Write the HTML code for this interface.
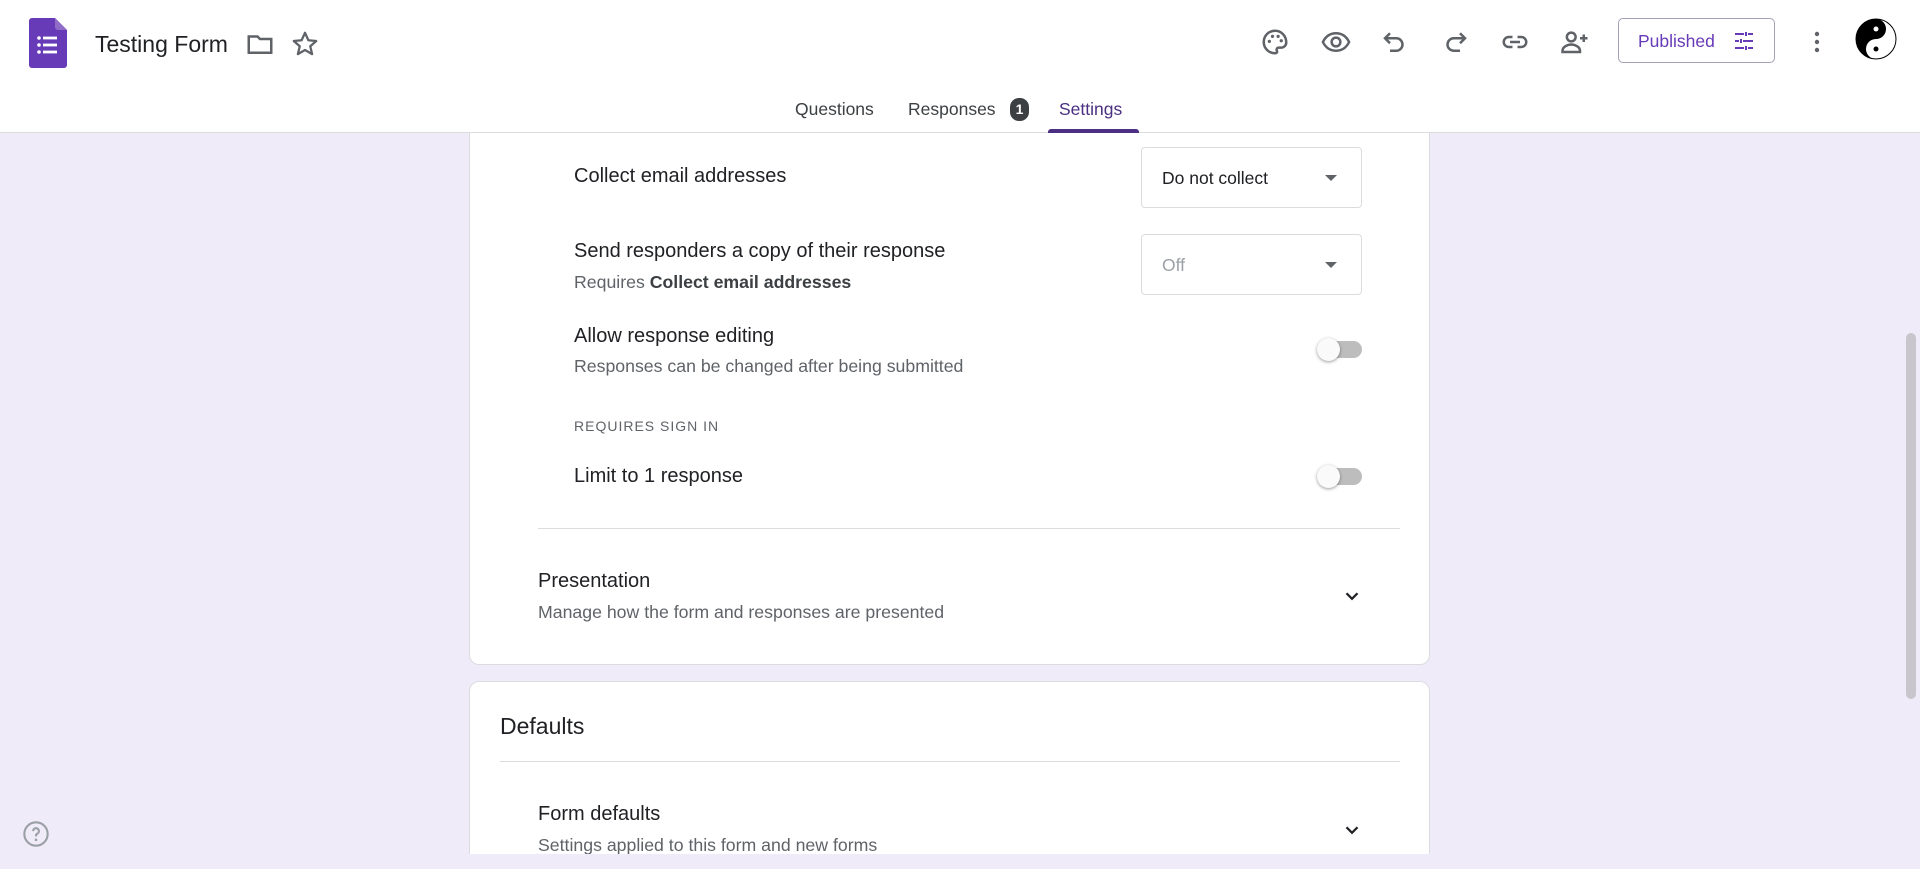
<!DOCTYPE html>
<html><head><meta charset="utf-8">
<style>
*{box-sizing:border-box;margin:0;padding:0}
body{width:1920px;height:869px;overflow:hidden;background:#f0ebf8;font-family:"Liberation Sans",Arial,sans-serif;color:#202124;position:relative}
.hdr{position:absolute;left:0;top:0;width:1920px;height:133px;background:#fff;border-bottom:1px solid #dadce0;z-index:5}
.abs{position:absolute}
.ic{position:absolute;top:27px;width:30px;height:30px}
.tab{position:absolute;top:99px;font-size:17.5px;color:#3c4043}
.card{position:absolute;left:469px;width:961px;background:#fff;border:1px solid #dadce0;border-radius:10px}
.t{position:absolute;font-size:20px;color:#202124}
.s{position:absolute;font-size:17.7px;color:#5f6368}
.dd{position:absolute;left:1141px;width:221px;height:61px;border:1px solid #dadce0;border-radius:4px;background:#fff}
.dd span{position:absolute;left:20px;top:20px;font-size:17.5px}
.dd i{position:absolute;right:24px;top:27px;border-left:6px solid transparent;border-right:6px solid transparent;border-top:6px solid #5f6368}
.tg{position:absolute;left:1316px;width:46px}
.tg .tr{position:absolute;left:6px;top:4px;width:40px;height:17px;border-radius:9px;background:#bdbdbd}
.tg .kn{position:absolute;left:1px;top:1px;width:23px;height:23px;border-radius:50%;background:#fafafa;box-shadow:0 1px 3px rgba(0,0,0,.4)}
.div{position:absolute;height:1px;background:#dadce0}
</style></head><body>
<div class="hdr">
  <svg class="abs" style="left:29px;top:18px" width="38" height="50" viewBox="0 0 38 50"><path d="M3 0h23l12 12v35a3 3 0 0 1-3 3H3a3 3 0 0 1-3-3V3a3 3 0 0 1 3-3z" fill="#673ab7"/><path d="M26 0l12 12H29a3 3 0 0 1-3-3z" fill="#8e6cc8"/><g fill="#fff"><circle cx="10" cy="20" r="1.8"/><circle cx="10" cy="27" r="1.8"/><circle cx="10" cy="34" r="1.8"/><rect x="14" y="18.6" width="14" height="2.8"/><rect x="14" y="25.6" width="14" height="2.8"/><rect x="14" y="32.6" width="14" height="2.8"/></g></svg>
  <div class="abs" style="left:95px;top:31px;font-size:23px;color:#202124">Testing Form</div>
  <svg class="ic" style="left:245px;top:29px" viewBox="0 0 24 24"><path d="M3 6h7l2 2h9v11H3z" fill="none" stroke="#5f6368" stroke-width="2"/></svg>
  <svg class="ic" style="left:290px;top:29px" viewBox="0 0 24 24"><path d="M12 3l2.7 6 6.3.6-4.8 4.2 1.5 6.3L12 16.8 6.3 20.1l1.5-6.3L3 9.6l6.3-.6z" fill="none" stroke="#5f6368" stroke-width="1.8" stroke-linejoin="round"/></svg>
  <svg class="ic" style="left:1260px" viewBox="0 0 24 24"><path d="M12 3a9 9 0 0 0 0 18c1.5 0 2-1 1.5-2-.6-1.2.2-2.5 1.5-2.5H17a4 4 0 0 0 4-4C21 7 17 3 12 3z" fill="none" stroke="#5f6368" stroke-width="2"/><circle cx="7.5" cy="11.5" r="1.3" fill="#5f6368"/><circle cx="10" cy="7.5" r="1.3" fill="#5f6368"/><circle cx="14.5" cy="7.5" r="1.3" fill="#5f6368"/><circle cx="17" cy="11" r="1.3" fill="#5f6368"/></svg>
  <svg class="ic" style="left:1321px" viewBox="0 0 24 24"><path d="M1.5 12C4 7 8 5 12 5s8 2 10.5 7C20 17 16 19 12 19s-8-2-10.5-7z" fill="none" stroke="#5f6368" stroke-width="2"/><circle cx="12" cy="12" r="3.5" fill="none" stroke="#5f6368" stroke-width="2"/></svg>
  <svg class="ic" style="left:1380px" viewBox="0 0 24 24"><path d="M8 5L4 9l4 4M4 9h9a5 5 0 0 1 0 10H8" fill="none" stroke="#5f6368" stroke-width="2"/></svg>
  <svg class="ic" style="left:1440px" viewBox="0 0 24 24"><path d="M16 5l4 4-4 4M20 9h-9a5 5 0 0 0 0 10h5" fill="none" stroke="#5f6368" stroke-width="2"/></svg>
  <svg class="ic" style="left:1500px" viewBox="0 0 24 24"><path d="M10 8H7a4 4 0 0 0 0 8h3M14 8h3a4 4 0 0 1 0 8h-3M8 12h8" fill="none" stroke="#5f6368" stroke-width="2"/></svg>
  <svg class="ic" style="left:1560px" viewBox="0 0 24 24"><circle cx="9" cy="8" r="3.5" fill="none" stroke="#5f6368" stroke-width="2"/><path d="M2 19c0-3 4-5 7-5s7 2 7 5v1H2z" fill="none" stroke="#5f6368" stroke-width="2"/><path d="M19 6v6M16 9h6" stroke="#5f6368" stroke-width="2"/></svg>
  <div class="abs" style="left:1618px;top:18px;width:157px;height:45px;border:1px solid #a8a0b8;border-radius:5px">
    <span class="abs" style="left:19px;top:12px;font-size:17.5px;color:#673ab7">Published</span>
    <svg class="abs" style="left:113px;top:10px" width="24" height="24" viewBox="0 0 24 24"><path d="M3 5h9M16 5h5M14 3v4M3 12h4M11 12h10M9 10v4M3 19h9M16 19h5M14 17v4" stroke="#673ab7" stroke-width="2"/></svg>
  </div>
  <svg class="abs" style="left:1808px;top:27px" width="18" height="30" viewBox="0 0 18 30"><circle cx="9" cy="7" r="2.2" fill="#5f6368"/><circle cx="9" cy="15" r="2.2" fill="#5f6368"/><circle cx="9" cy="23" r="2.2" fill="#5f6368"/></svg>
  <svg class="abs" style="left:1855px;top:18px" width="42" height="42" viewBox="0 0 42 42"><circle cx="21" cy="21" r="20" fill="#fff" stroke="#000" stroke-width="1"/><path d="M21 1a20 20 0 0 0 0 40a10 10 0 0 1 0-20a10 10 0 0 0 0-20z" fill="#000"/><circle cx="21" cy="11" r="2.5" fill="#fff"/><circle cx="21" cy="31" r="2.5" fill="#000"/></svg>
  <div class="tab" style="left:795px">Questions</div>
  <div class="tab" style="left:908px">Responses</div>
  <div class="abs" style="left:1010px;top:98px;width:19px;height:23px;border-radius:9px;background:#3c4043;color:#fff;font-size:14px;text-align:center;line-height:23px;font-weight:bold">1</div>
  <div class="tab" style="left:1059px;color:#4a2f82">Settings</div>
  <div class="abs" style="left:1048px;top:129px;width:91px;height:4px;border-radius:3px 3px 0 0;background:#4a2f82"></div>
</div>

<div class="card" style="top:100px;height:565px"></div>
<div class="t" style="left:574px;top:165px">Collect email addresses</div>
<div class="dd" style="top:147px"><span>Do not collect</span><i></i></div>
<div class="t" style="left:574px;top:240px">Send responders a copy of their response</div>
<div class="s" style="left:574px;top:272px">Requires <b style="color:#3c4043">Collect email addresses</b></div>
<div class="dd" style="top:234px"><span style="color:#9aa0a6">Off</span><i></i></div>
<div class="t" style="left:574px;top:325px">Allow response editing</div>
<div class="s" style="left:574px;top:356px">Responses can be changed after being submitted</div>
<div class="tg" style="top:337px"><div class="tr"></div><div class="kn"></div></div>
<div class="abs" style="left:574px;top:418px;font-size:14px;letter-spacing:1px;color:#5f6368">REQUIRES SIGN IN</div>
<div class="t" style="left:574px;top:465px">Limit to 1 response</div>
<div class="tg" style="top:464px"><div class="tr"></div><div class="kn"></div></div>
<div class="div" style="left:538px;top:528px;width:862px"></div>
<div class="t" style="left:538px;top:570px">Presentation</div>
<div class="s" style="left:538px;top:602px">Manage how the form and responses are presented</div>
<svg class="abs" style="left:1341px;top:585px" width="22" height="22" viewBox="0 0 24 24"><path d="M6 9l6 6 6-6" fill="none" stroke="#202124" stroke-width="2.5"/></svg>

<div class="card" style="top:681px;height:174px;border-bottom:none;border-radius:10px 10px 0 0"></div>
<div class="abs" style="left:500px;top:713px;font-size:23px">Defaults</div>
<div class="div" style="left:500px;top:761px;width:900px"></div>
<div class="t" style="left:538px;top:803px">Form defaults</div>
<div class="s" style="left:538px;top:835px">Settings applied to this form and new forms</div>
<svg class="abs" style="left:1341px;top:819px" width="22" height="22" viewBox="0 0 24 24"><path d="M6 9l6 6 6-6" fill="none" stroke="#202124" stroke-width="2.5"/></svg>
<div class="abs" style="left:0;top:854px;width:1920px;height:15px;background:#f0ebf8"></div>

<svg class="abs" style="left:22px;top:820px" width="28" height="28" viewBox="0 0 24 24"><circle cx="12" cy="12" r="10" fill="none" stroke="#9aa0a6" stroke-width="1.8"/><path d="M9.5 9.5a2.5 2.5 0 1 1 3.5 2.3c-.7.3-1 .9-1 1.7v.5" fill="none" stroke="#9aa0a6" stroke-width="1.8"/><circle cx="12" cy="17" r="1.1" fill="#9aa0a6"/></svg>
<div class="abs" style="left:1906px;top:333px;width:10px;height:366px;border-radius:5px;background:#c8c5cc"></div>
</body></html>
